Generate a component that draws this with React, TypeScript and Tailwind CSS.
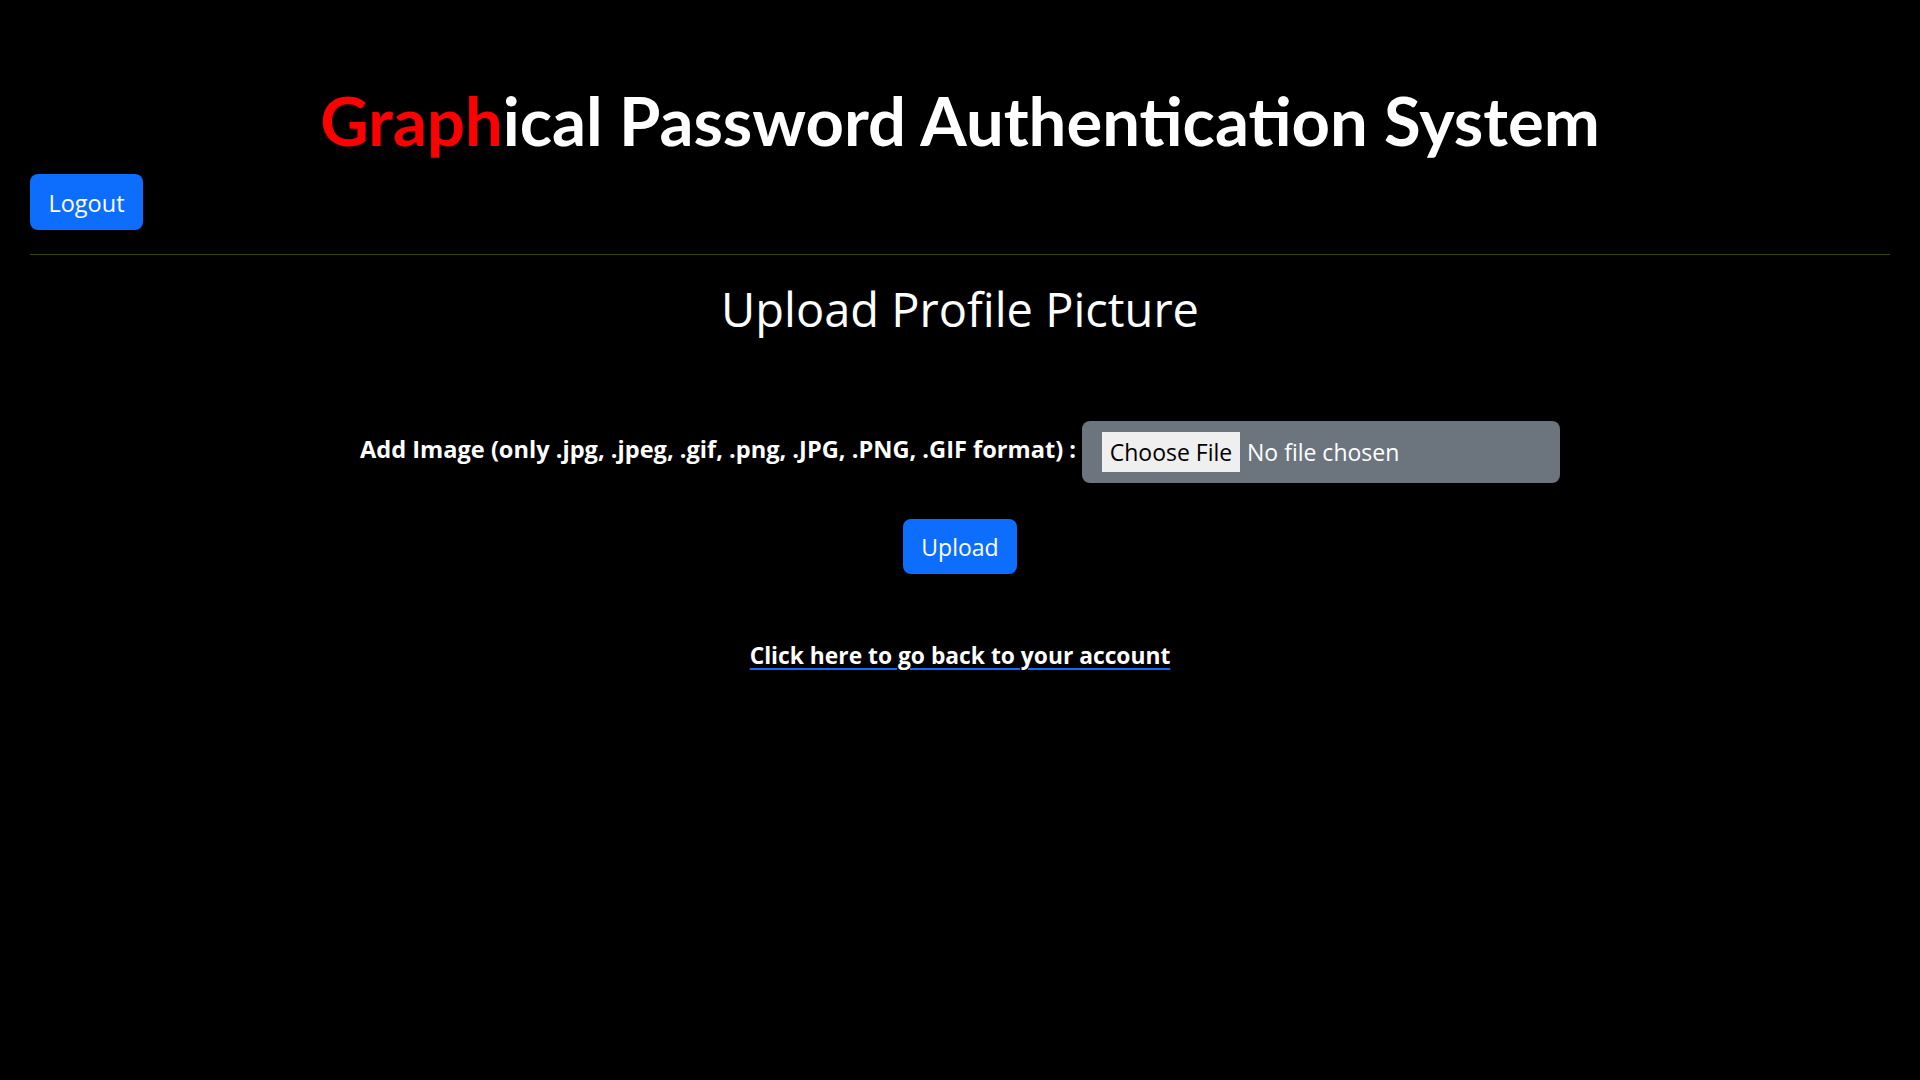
import type React from "react"

const sans = { fontFamily: '"Open Sans", "Noto Sans", sans-serif' } as React.CSSProperties

export default function App() {
  return (
    <div className="min-h-screen bg-black text-white px-[30px] font-['Open_Sans',sans-serif]">
      <h1 className="pt-[87px] text-center font-['Lato',sans-serif] text-[67px] font-bold leading-none">
        <span className="text-[#ff0000]">Graph</span>ical Password Authentication System
      </h1>

      <div className="mt-[20px]">
        <button className="flex h-[56px] w-[113px] items-center justify-center rounded-lg bg-[#0d6efd] pt-[3px] text-[23.5px] text-white">
          Logout
        </button>
      </div>

      <hr className="mt-[24px] border-0 border-t border-[#404000]" />

      <h2 className="mt-[31px] text-center text-[47px] leading-none">Upload Profile Picture</h2>

      <form className="mt-[88px] flex flex-col items-center" onSubmit={(e) => e.preventDefault()}>
        <div className="flex items-center gap-[6px]">
          <label className="mb-[4px] text-[23.6px] font-bold">
            Add Image (only .jpg, .jpeg, .gif, .png, .JPG, .PNG, .GIF format) :
          </label>
          <div className="flex h-[62px] w-[478px] items-center rounded-lg bg-[#6c757d] pl-[20px]">
            <span className="flex h-[40px] w-[138px] items-center justify-center bg-[#efefef] text-[23px] text-black">
              Choose File
            </span>
            <span className="ml-[7px] text-[23px] text-white">No file chosen</span>
          </div>
        </div>

        <button
          type="submit"
          className="mt-[36px] flex h-[55px] w-[114px] items-center justify-center rounded-lg bg-[#0d6efd] pt-[2px] text-[23px] text-white"
        >
          Upload
        </button>
      </form>

      <div className="mt-[71px] text-center leading-none" style={sans}>
        <a
          href="#"
          className="text-[22.8px] font-bold text-white underline decoration-[#0d6efd] decoration-2 underline-offset-[4px]"
        >
          Click here to go back to your account
        </a>
      </div>
    </div>
  )
}
